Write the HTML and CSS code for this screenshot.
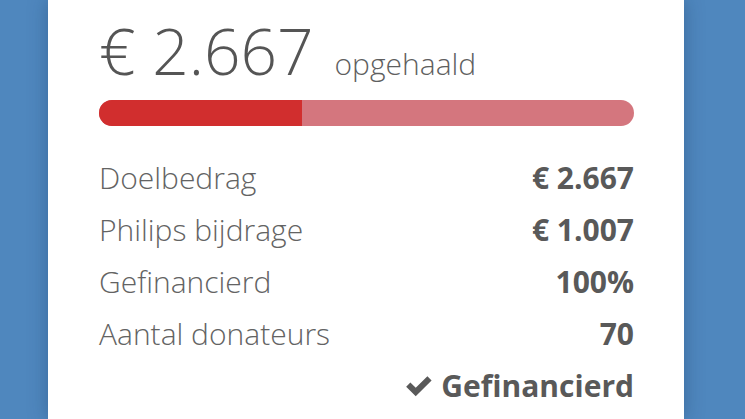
FILE: index.html
```html
<!DOCTYPE html>
<html lang="nl">
<head>
<meta charset="utf-8">
<link rel="stylesheet" href="styles.css">
</head>
<body>
<div class="card">
  <div class="raised">
    <span class="amount">€ 2.667</span>
    <span class="raised-label">opgehaald</span>
  </div>
  <div class="bar"><div class="bar-fill" style="width:38%"></div></div>
  <div class="rows">
    <div class="row"><span class="label">Doelbedrag</span><span class="value">€ 2.667</span></div>
    <div class="row"><span class="label">Philips bijdrage</span><span class="value">€ 1.007</span></div>
    <div class="row"><span class="label">Gefinancierd</span><span class="value">100%</span></div>
    <div class="row"><span class="label">Aantal donateurs</span><span class="value">70</span></div>
    <div class="row status"><span class="value"><svg class="check" viewBox="0 0 24 24"><path d="M1 12.6 L4.6 9 L9.2 13.6 L19.2 3.6 L22.8 7.2 L9.2 20.8 Z" fill="#595959"/></svg>Gefinancierd</span></div>
  </div>
</div>
</body>
</html>
```

FILE: styles.css
```css
html, body {
  margin: 0;
  padding: 0;
  height: 100%;
  overflow: hidden;
}
body {
  background: #4f87be;
  font-family: "Open Sans", sans-serif;
  color: #5a5a5a;
}
.card {
  margin: 0 61px 0 48px;
  background: #fff;
  height: 100%;
  box-sizing: border-box;
  padding: 13px 50px 0 51px;
  box-shadow: 0 0 18px rgba(20, 50, 90, 0.35);
}
.raised {
  display: flex;
  align-items: baseline;
  gap: 21px;
}
.amount {
  font-size: 64px;
  font-weight: 300;
  line-height: 76px;
  color: #555;
}
.raised-label {
  font-size: 30px;
  font-weight: 300;
  color: #5f5f5f;
}
.bar {
  margin-top: 11px;
  height: 26px;
  border-radius: 13px;
  background: #d4767e;
  overflow: hidden;
}
.bar-fill {
  height: 100%;
  background: #d12e2e;
}
.rows {
  margin-top: 26px;
}
.row {
  display: flex;
  justify-content: space-between;
  align-items: baseline;
  height: 52px;
  line-height: 52px;
}
.label {
  font-size: 30px;
  font-weight: 300;
  color: #636363;
}
.value {
  font-size: 30px;
  font-weight: 700;
  color: #595959;
}
.status {
  justify-content: flex-end;
}
.check {
  width: 28px;
  height: 28px;
  margin-right: 8px;
  vertical-align: -3px;
}
```
